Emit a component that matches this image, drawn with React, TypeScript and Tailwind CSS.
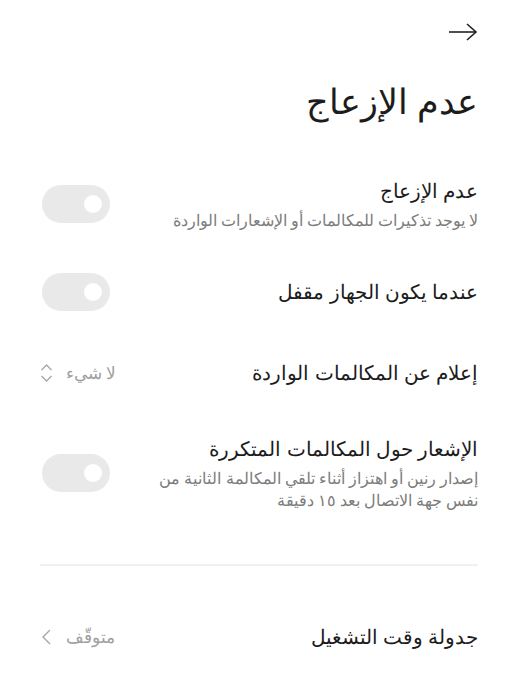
const font = { fontFamily: '"Noto Sans", sans-serif' };

function Toggle() {
  return (
    <div className="ml-[2px] flex h-[38px] w-[68px] shrink-0 items-center justify-start rounded-full bg-[#e9e9e9] pr-[8px]">
      <div className="h-[18px] w-[18px] rounded-full bg-white" />
    </div>
  );
}

function Row({ title, sub, children }: { title: string; sub?: string[]; children?: React.ReactNode }) {
  return (
    <div className="flex items-center justify-between gap-4">
      <div className="flex flex-col">
        <p className="text-[20px] leading-[30px] text-[#1c1c1c]">{title}</p>
        {sub && (
          <div className="mt-[3px] text-[15.7px] leading-[22px] text-[#7c7c7c]">
            {sub.map((line) => (
              <p key={line}>{line}</p>
            ))}
          </div>
        )}
      </div>
      {children}
    </div>
  );
}

function Value({ label, chevron }: { label: string; chevron: 'updown' | 'left' }) {
  return (
    <div className="flex items-center gap-[13px] text-[17px] text-[#a0a0a0]">
      <span>{label}</span>
      {chevron === 'updown' ? (
        <svg width="13" height="24" viewBox="0 0 13 24" fill="none" stroke="#a8a8a8" strokeWidth="1.4">
          <path d="M1.5 9 L6.5 4 L11.5 9" />
          <path d="M1.5 15 L6.5 20 L11.5 15" />
        </svg>
      ) : (
        <svg width="13" height="22" viewBox="0 0 13 22" fill="none" stroke="#a8a8a8" strokeWidth="1.4">
          <path d="M10 4 L3 11 L10 18" />
        </svg>
      )}
    </div>
  );
}

export default function App() {
  return (
    <div dir="rtl" style={font} className="min-h-[682px] w-[511px] bg-white pl-[40px] pr-[33px]">
      <div className="flex h-[62px] items-center pt-[2px]">
        <svg width="30" height="20" viewBox="0 0 30 20" fill="none" stroke="#222" strokeWidth="1.6">
          <path d="M1 10 H28" />
          <path d="M19 2 L28 10 L19 18" />
        </svg>
      </div>
      <h1 className="mt-[14px] text-[35px] leading-[50px] text-[#1c1c1c]">عدم الإزعاج</h1>

      <div className="mt-[50px]">
        <Row title="عدم الإزعاج" sub={['لا يوجد تذكيرات للمكالمات أو الإشعارات الواردة']}>
          <Toggle />
        </Row>
      </div>

      <div className="mt-[42px]">
        <Row title="عندما يكون الجهاز مقفل">
          <Toggle />
        </Row>
      </div>

      <div className="mt-[47px]">
        <Row title="إعلام عن المكالمات الواردة">
          <Value label="لا شيء" chevron="updown" />
        </Row>
      </div>

      <div className="mt-[46px]">
        <Row
          title="الإشعار حول المكالمات المتكررة"
          sub={['إصدار رنين أو اهتزاز أثناء تلقي المكالمة الثانية من', 'نفس جهة الاتصال بعد ١٥ دقيقة']}
        >
          <Toggle />
        </Row>
      </div>

      <div className="mt-[53px] h-[2px] bg-[#f0f0f0]" />

      <div className="mt-[56px]">
        <Row title="جدولة وقت التشغيل">
          <Value label="متوقّف" chevron="left" />
        </Row>
      </div>
    </div>
  );
}
